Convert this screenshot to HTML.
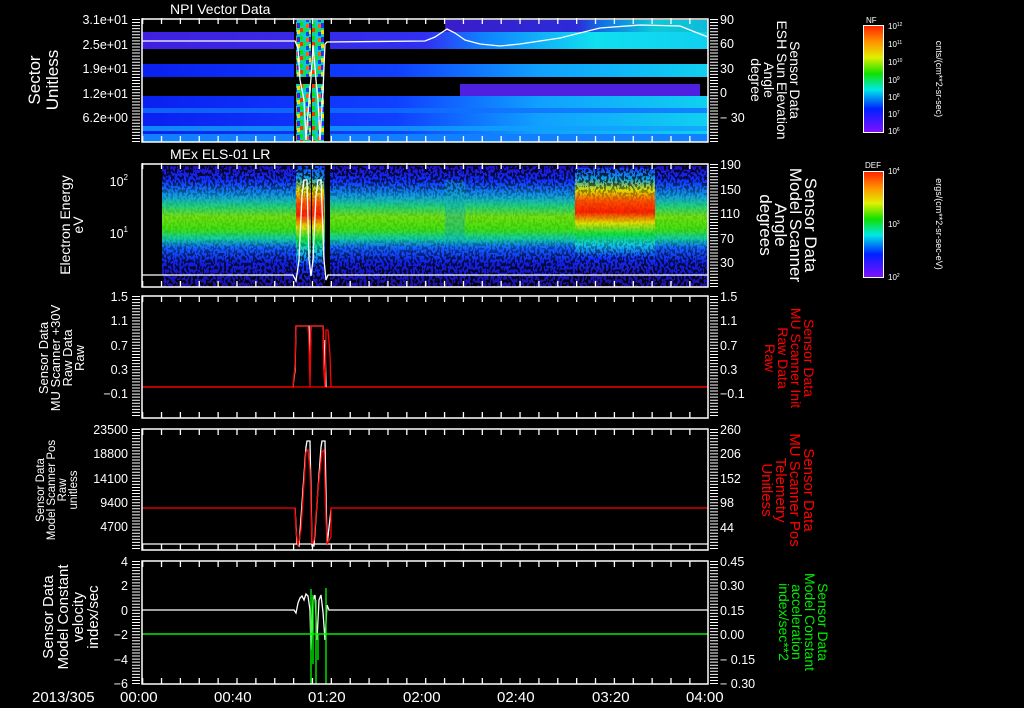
<!DOCTYPE html>
<html><head><meta charset="utf-8"><style>
html,body{margin:0;padding:0;background:#000;}
svg{display:block}
text{font-family:"Liberation Sans",sans-serif;fill:#fff}
text.r{fill:#f00}
text.g{fill:#0e0}
</style></head><body>
<svg width="1024" height="708" viewBox="0 0 1024 708" xmlns="http://www.w3.org/2000/svg">
<defs>
<linearGradient id="rb" x1="0" y1="0" x2="0" y2="1">
<stop offset="0" stop-color="#ff2000"/><stop offset="0.15" stop-color="#ff9000"/><stop offset="0.3" stop-color="#e0f000"/><stop offset="0.45" stop-color="#10e000"/><stop offset="0.6" stop-color="#00e8e8"/><stop offset="0.78" stop-color="#0020ff"/><stop offset="1" stop-color="#8010ff"/>
</linearGradient>
<linearGradient id="els" x1="0" y1="0" x2="0" y2="1">
<stop offset="0" stop-color="#2010c0"/><stop offset="0.12" stop-color="#1030ff"/><stop offset="0.25" stop-color="#10a0e0"/><stop offset="0.33" stop-color="#20d080"/><stop offset="0.42" stop-color="#70e010"/><stop offset="0.52" stop-color="#40e010"/><stop offset="0.6" stop-color="#10d0a0"/><stop offset="0.68" stop-color="#1060ff"/><stop offset="0.8" stop-color="#1020e0"/><stop offset="1" stop-color="#2010a0"/>
</linearGradient>
<linearGradient id="elsR" x1="0" y1="0" x2="0" y2="1">
<stop offset="0" stop-color="#1040ff"/><stop offset="0.1" stop-color="#10a0e0"/><stop offset="0.2" stop-color="#e0e000"/><stop offset="0.3" stop-color="#ff5000"/><stop offset="0.4" stop-color="#ff2000"/><stop offset="0.5" stop-color="#e0e000"/><stop offset="0.6" stop-color="#10e040"/><stop offset="0.7" stop-color="#10c8e8"/><stop offset="0.82" stop-color="#1030ff"/><stop offset="1" stop-color="#2010a0"/>
</linearGradient>
<linearGradient id="blueR" x1="0" y1="0" x2="1" y2="0">
<stop offset="0" stop-color="#0a20f0"/><stop offset="0.45" stop-color="#1040ff"/><stop offset="0.7" stop-color="#10a0ff"/><stop offset="1" stop-color="#10d0f0"/>
</linearGradient>
<linearGradient id="topR" x1="0" y1="0" x2="1" y2="0">
<stop offset="0" stop-color="#4020e0"/><stop offset="0.5" stop-color="#3030f0"/><stop offset="0.6" stop-color="#1080ff"/><stop offset="0.8" stop-color="#10e0f0"/><stop offset="1" stop-color="#10d0f0"/>
</linearGradient>
<linearGradient id="spk" x1="0" y1="0" x2="0" y2="1">
<stop offset="0" stop-color="#fff" stop-opacity="0.9"/><stop offset="0.15" stop-color="#fff" stop-opacity="0.6"/><stop offset="0.3" stop-color="#fff" stop-opacity="0.1"/><stop offset="0.6" stop-color="#fff" stop-opacity="0.1"/><stop offset="0.75" stop-color="#fff" stop-opacity="0.6"/><stop offset="1" stop-color="#fff" stop-opacity="1"/>
</linearGradient>
<mask id="spkm"><rect x="142" y="164" width="566" height="124" fill="url(#spk)"/></mask>
<filter id="noise" x="0" y="0" width="100%" height="100%">
<feTurbulence type="fractalNoise" baseFrequency="0.45 0.3" numOctaves="1" seed="3"/>
<feColorMatrix type="matrix" values="0 0 0 0 0  0 0 0 0 0  0 0 0 0 0  6 0 0 0 -2.6"/>
<feComponentTransfer><feFuncA type="discrete" tableValues="0 1"/></feComponentTransfer>
</filter>
<pattern id="mix" width="12" height="14" patternUnits="userSpaceOnUse">
<rect width="12" height="14" fill="#10d0a0"/>
<rect x="0" y="0" width="3" height="4" fill="#ff3000"/><rect x="3" y="0" width="3" height="4" fill="#10e040"/>
<rect x="6" y="4" width="3" height="4" fill="#1040ff"/><rect x="9" y="2" width="3" height="4" fill="#f0e000"/>
<rect x="0" y="8" width="3" height="4" fill="#10e000"/><rect x="6" y="10" width="3" height="4" fill="#ff6000"/>
<rect x="3" y="7" width="3" height="4" fill="#10c0ff"/><rect x="9" y="9" width="3" height="5" fill="#2030ff"/>
</pattern>
</defs>

<!-- Panel 1 -->
<text x="170" y="14" font-size="14">NPI Vector Data</text>
<rect x="142" y="32" width="566" height="17" fill="url(#topR)"/>
<rect x="142" y="20" width="566" height="12" fill="#000"/>
<rect x="445" y="20" width="263" height="12" fill="url(#topR)" opacity="0.9"/>
<rect x="142" y="64" width="566" height="13" fill="url(#blueR)"/>
<rect x="460" y="84" width="240" height="12" fill="#5020e0"/>
<rect x="142" y="96" width="566" height="46" fill="url(#blueR)"/>
<rect x="142" y="108" width="566" height="5" fill="#1070ff" opacity="0.8"/>
<rect x="142" y="126" width="566" height="5" fill="#10a0ff" opacity="0.8"/>
<rect x="142" y="134" width="566" height="8" fill="#1080ff"/>
<rect x="294" y="19" width="36" height="124" fill="#000"/>
<rect x="296" y="20" width="15" height="57" fill="url(#mix)"/>
<rect x="312" y="20" width="12" height="57" fill="url(#mix)"/>
<rect x="296" y="84" width="15" height="58" fill="url(#mix)"/>
<rect x="312" y="84" width="12" height="58" fill="url(#mix)"/>
<polyline fill="none" stroke="#fff" stroke-width="1.3" points="142,41 295,41 298,48 300,80 304,100 306,140 309,100 311,78 313,45 316,80 318,100 320,140 323,90 325,44 327,42 425,41 435,37 447,29 455,33 465,40 480,44 500,46 520,44 560,38 600,28 640,25 680,26 695,32 708,37"/>
<rect x="142" y="19" width="566" height="123" fill="none" stroke="#fff" stroke-width="1.5"/>

<!-- Panel 2 -->
<text x="170" y="159" font-size="14">MEx ELS-01 LR</text>
<rect x="162" y="166" width="546" height="121" fill="url(#els)"/>
<rect x="575" y="168" width="80" height="110" fill="url(#elsR)"/>
<rect x="296" y="166" width="15" height="122" fill="url(#elsR)"/>
<rect x="312" y="166" width="12" height="122" fill="url(#elsR)"/>
<rect x="445" y="180" width="20" height="60" fill="#10b0c0" opacity="0.4"/>
<g mask="url(#spkm)"><rect x="142" y="164" width="566" height="124" filter="url(#noise)"/></g>
<rect x="311" y="166" width="1" height="120" fill="#000"/>
<rect x="325" y="166" width="5" height="120" fill="#000"/>
<polyline fill="none" stroke="#fff" stroke-width="1.3" points="142,275 293,275 296,281 299,260 302,195 304,180 307,180 309,260 311,276 313,260 316,195 318,180 321,180 324,260 326,280 328,275 708,275"/>
<rect x="142" y="164" width="566" height="123" fill="none" stroke="#fff" stroke-width="1.5"/>

<!-- Panel 3 -->
<line x1="142" y1="387" x2="708" y2="387" stroke="#f00" stroke-width="1.3"/>
<polyline fill="none" stroke="#fff" stroke-width="1.3" points="293,387 295,370 296,326 309,326 310,370 311,326 323,326 324,370 325,340 326,387"/>
<polyline fill="none" stroke="#f00" stroke-width="1.3" points="142,387 293,387 295,365 296,326 308,326 309,345 310,387 311,326 323,326 324,375 325,387 326,330 328,330 330,355 331,387 708,387"/>
<rect x="142" y="296" width="566" height="122" fill="none" stroke="#fff" stroke-width="1.5"/>

<!-- Panel 4 -->
<line x1="142" y1="544" x2="708" y2="544" stroke="#fff" stroke-width="1.3"/>
<polyline fill="none" stroke="#fff" stroke-width="1.3" points="295,508 297,544 299,546 306,447 307,441 310,441 312,546 314,546 321,447 322,441 325,441 327,545 331,510"/>
<polyline fill="none" stroke="#f00" stroke-width="1.3" points="142,508 295,508 296,530 298,546 301,530 306,452 308,450 310,470 312,544 314,540 318,490 322,452 324,450 326,520 327,544 331,537 331,508 708,508"/>
<rect x="142" y="429" width="566" height="121" fill="none" stroke="#fff" stroke-width="1.5"/>

<!-- Panel 5 -->
<polyline fill="none" stroke="#fff" stroke-width="1.3" points="142,610 294,610 296,613 298,603 300,598 302,596 304,600 306,594 308,596 310,610 311,650 313,600 315,595 317,640 319,600 321,595 323,612 325,640 327,605 329,610 708,610"/>
<line x1="142" y1="634" x2="708" y2="634" stroke="#0e0" stroke-width="1.5"/>
<g stroke="#0e0" stroke-width="1.4">
<line x1="311" y1="589" x2="311" y2="684"/><line x1="313" y1="595" x2="313" y2="664"/><line x1="316" y1="600" x2="316" y2="684"/><line x1="318" y1="634" x2="318" y2="660"/><line x1="326" y1="588" x2="326" y2="684"/>
</g>
<rect x="142" y="561" width="566" height="123" fill="none" stroke="#fff" stroke-width="1.5"/>

<!-- time ticks -->
<g stroke="#fff" stroke-width="6" stroke-dasharray="1.3 17.57">
<line x1="142" y1="21" x2="708" y2="21"/>
<line x1="142" y1="139" x2="708" y2="139"/>
<line x1="142" y1="166" x2="708" y2="166"/>
<line x1="142" y1="284" x2="708" y2="284"/>
<line x1="142" y1="299" x2="708" y2="299"/>
<line x1="142" y1="415" x2="708" y2="415"/>
<line x1="142" y1="432" x2="708" y2="432"/>
<line x1="142" y1="547" x2="708" y2="547"/>
<line x1="142" y1="564" x2="708" y2="564"/>
<line x1="142" y1="681" x2="708" y2="681"/>
</g>
<!-- minor y ticks -->
<g stroke="#fff" stroke-dasharray="1 2.05" stroke-width="8">
<line x1="136" y1="19" x2="136" y2="142"/>
<line x1="714" y1="19" x2="714" y2="142"/>
<line x1="714" y1="164" x2="714" y2="287"/>
<line x1="136" y1="296" x2="136" y2="418"/>
<line x1="714" y1="296" x2="714" y2="418"/>
<line x1="136" y1="429" x2="136" y2="550"/>
<line x1="714" y1="429" x2="714" y2="550"/>
<line x1="136" y1="561" x2="136" y2="684"/>
<line x1="714" y1="561" x2="714" y2="684"/>
</g>

<!-- left labels -->
<g font-size="12.5" text-anchor="end">
<text x="128" y="24">3.1e+01</text><text x="128" y="49">2.5e+01</text><text x="128" y="73">1.9e+01</text><text x="128" y="98">1.2e+01</text><text x="128" y="122">6.2e+00</text>
<text x="128" y="186">10<tspan font-size="8" dy="-6">2</tspan></text><text x="128" y="238">10<tspan font-size="8" dy="-6">1</tspan></text>
<text x="128" y="301">1.5</text><text x="128" y="325">1.1</text><text x="128" y="350">0.7</text><text x="128" y="374">0.3</text><text x="128" y="398">−0.1</text>
<text x="128" y="434">23500</text><text x="128" y="458">18800</text><text x="128" y="483">14100</text><text x="128" y="507">9400</text><text x="128" y="531">4700</text>
<text x="128" y="566">4</text><text x="128" y="590">2</text><text x="128" y="615">0</text><text x="128" y="639">−2</text><text x="128" y="664">−4</text><text x="128" y="688">−6</text>
</g>
<g font-size="12.5">
<text x="720" y="24">90</text><text x="720" y="48">60</text><text x="720" y="73">30</text><text x="720" y="97">0</text><text x="720" y="122">− 30</text>
<text x="720" y="169">190</text><text x="720" y="194">150</text><text x="720" y="218">110</text><text x="720" y="243">70</text><text x="720" y="267">30</text>
<text x="720" y="301">1.5</text><text x="720" y="325">1.1</text><text x="720" y="350">0.7</text><text x="720" y="374">0.3</text><text x="720" y="398">−0.1</text>
<text x="720" y="434">260</text><text x="720" y="458">206</text><text x="720" y="483">152</text><text x="720" y="507">98</text><text x="720" y="532">44</text>
<text x="720" y="566">0.45</text><text x="720" y="590">0.30</text><text x="720" y="615">0.15</text><text x="720" y="639">0.00</text><text x="720" y="664">− 0.15</text><text x="720" y="688">− 0.30</text>
</g>
<g font-size="15">
<text x="32" y="702">2013/305</text>
<text x="120" y="702">00:00</text><text x="214" y="702">00:40</text><text x="308" y="702">01:20</text><text x="403" y="702">02:00</text><text x="497" y="702">02:40</text><text x="592" y="702">03:20</text><text x="686" y="702">04:00</text>
</g>

<!-- left axis titles -->
<g text-anchor="middle">
<text transform="translate(40,80) rotate(-90)" font-size="17">Sector</text>
<text transform="translate(58,80) rotate(-90)" font-size="17">Unitless</text>
<text transform="translate(70,225) rotate(-90)" font-size="14">Electron Energy</text>
<text transform="translate(83,225) rotate(-90)" font-size="14">eV</text>
<text transform="translate(48,358) rotate(-90)" font-size="13">Sensor Data</text>
<text transform="translate(60,358) rotate(-90)" font-size="13">MU Scanner +30V</text>
<text transform="translate(72,358) rotate(-90)" font-size="13">Raw Data</text>
<text transform="translate(84,358) rotate(-90)" font-size="13">Raw</text>
<text transform="translate(44,490) rotate(-90)" font-size="11.5">Sensor Data</text>
<text transform="translate(55,490) rotate(-90)" font-size="11.5">Model Scanner Pos</text>
<text transform="translate(66,490) rotate(-90)" font-size="11.5">Raw</text>
<text transform="translate(77,490) rotate(-90)" font-size="11.5">unitless</text>
<text transform="translate(53,617) rotate(-90)" font-size="15">Sensor Data</text>
<text transform="translate(68,617) rotate(-90)" font-size="15">Model Constant</text>
<text transform="translate(83,617) rotate(-90)" font-size="15">velocity</text>
<text transform="translate(98,617) rotate(-90)" font-size="15">index/sec</text>
</g>
<!-- right axis titles -->
<g text-anchor="middle">
<text transform="translate(790,80) rotate(90)" font-size="14">Sensor Data</text>
<text transform="translate(777,80) rotate(90)" font-size="14">ESH Sun Elevation</text>
<text transform="translate(764,80) rotate(90)" font-size="14">Angle</text>
<text transform="translate(751,80) rotate(90)" font-size="14">degree</text>
<text transform="translate(805,225) rotate(90)" font-size="17">Sensor Data</text>
<text transform="translate(790,225) rotate(90)" font-size="17">Model Scanner</text>
<text transform="translate(775,225) rotate(90)" font-size="17">Angle</text>
<text transform="translate(760,225) rotate(90)" font-size="17">degrees</text>
<text class="r" transform="translate(804,358) rotate(90)" font-size="14">Sensor Data</text>
<text class="r" transform="translate(791,358) rotate(90)" font-size="14">MU Scanner Init</text>
<text class="r" transform="translate(778,358) rotate(90)" font-size="14">Raw Data</text>
<text class="r" transform="translate(765,358) rotate(90)" font-size="14">Raw</text>
<text class="r" transform="translate(804,490) rotate(90)" font-size="15">Sensor Data</text>
<text class="r" transform="translate(790,490) rotate(90)" font-size="15">MU Scanner Pos</text>
<text class="r" transform="translate(776,490) rotate(90)" font-size="15">Telemetry</text>
<text class="r" transform="translate(762,490) rotate(90)" font-size="15">Unitless</text>
<text class="g" transform="translate(818,622) rotate(90)" font-size="14">Sensor Data</text>
<text class="g" transform="translate(805,622) rotate(90)" font-size="14">Model Constant</text>
<text class="g" transform="translate(792,622) rotate(90)" font-size="14">acceleration</text>
<text class="g" transform="translate(779,622) rotate(90)" font-size="14">index/sec**2</text>
</g>

<!-- colorbars -->
<rect x="863.5" y="25.5" width="20" height="107" fill="url(#rb)" stroke="#fff"/>
<rect x="863.5" y="171.5" width="20" height="106" fill="url(#rb)" stroke="#fff"/>
<text x="866" y="23" font-size="8">NF</text>
<text x="865" y="168" font-size="8">DEF</text>
<g font-size="8">
<text x="888" y="29">10<tspan font-size="5" dy="-3">12</tspan></text>
<text x="888" y="47">10<tspan font-size="5" dy="-3">11</tspan></text>
<text x="888" y="65">10<tspan font-size="5" dy="-3">10</tspan></text>
<text x="888" y="83">10<tspan font-size="5" dy="-3">9</tspan></text>
<text x="888" y="100">10<tspan font-size="5" dy="-3">8</tspan></text>
<text x="888" y="117">10<tspan font-size="5" dy="-3">7</tspan></text>
<text x="888" y="134">10<tspan font-size="5" dy="-3">6</tspan></text>
<text x="888" y="174">10<tspan font-size="5" dy="-3">4</tspan></text>
<text x="888" y="227">10<tspan font-size="5" dy="-3">3</tspan></text>
<text x="888" y="280">10<tspan font-size="5" dy="-3">2</tspan></text>
</g>
<text transform="translate(936,79) rotate(90)" text-anchor="middle" font-size="9">cnts/(cm**2-sr-sec)</text>
<text transform="translate(936,224) rotate(90)" text-anchor="middle" font-size="9">ergs/(cm**2-sr-sec-eV)</text>
</svg>
</body></html>
